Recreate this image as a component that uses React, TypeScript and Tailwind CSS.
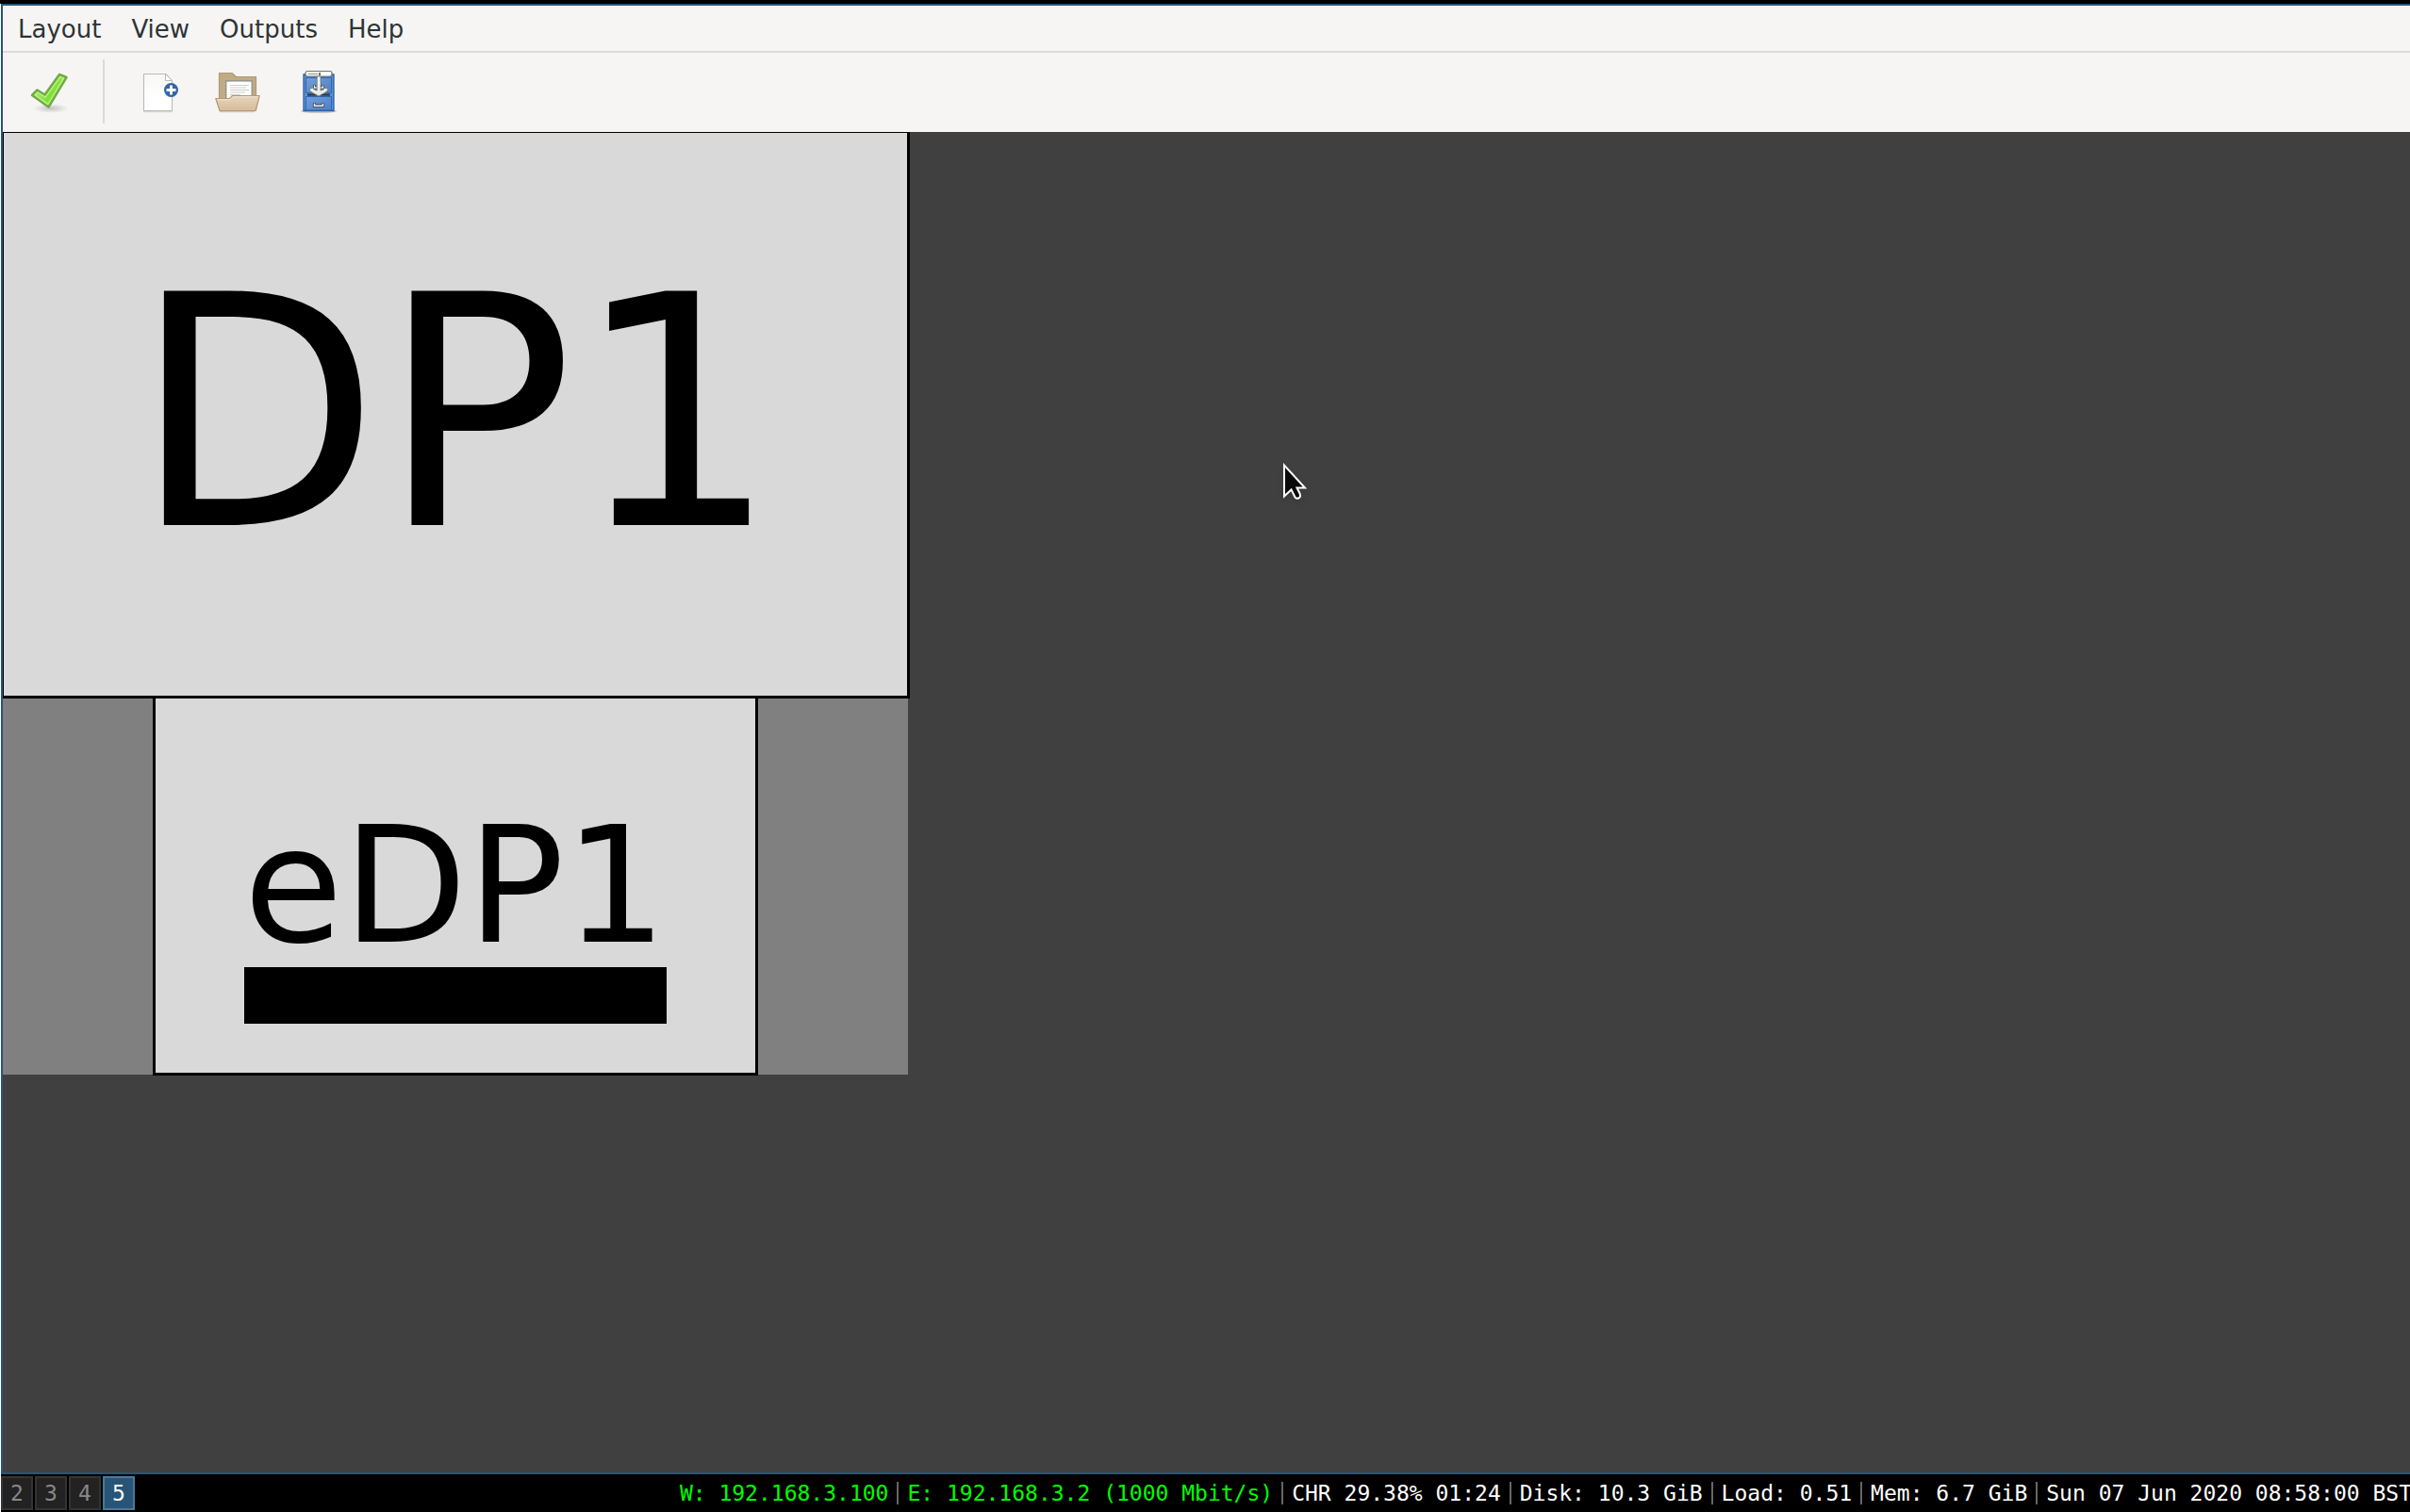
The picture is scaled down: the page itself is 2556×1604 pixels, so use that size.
import React from "react";

const menus = ["Layout", "View", "Outputs", "Help"];
const workspaces = ["2", "3", "4", "5"];
const status = [
  { text: "W: 192.168.3.100", up: true },
  { text: "E: 192.168.3.2 (1000 Mbit/s)", up: true },
  { text: "CHR 29.38% 01:24", up: false },
  { text: "Disk: 10.3 GiB", up: false },
  { text: "Load: 0.51", up: false },
  { text: "Mem: 6.7 GiB", up: false },
  { text: "Sun 07 Jun 2020 08:58:00 BST", up: false },
];

function ApplyIcon() {
  return (
    <svg width="48" height="48" viewBox="0 0 48 48" aria-hidden="true">
      <defs>
        <radialGradient id="tickShadow">
          <stop offset="0" stopColor="#000" stopOpacity="0.2" />
          <stop offset="1" stopColor="#000" stopOpacity="0" />
        </radialGradient>
        <linearGradient id="tickFill" x1="0" y1="0" x2="1" y2="0">
          <stop offset="0" stopColor="#b4e884" />
          <stop offset="0.45" stopColor="#7ee02e" />
          <stop offset="1" stopColor="#94e24c" />
        </linearGradient>
      </defs>
      <ellipse cx="27" cy="42" rx="19" ry="5" fill="url(#tickShadow)" />
      <path d="M7 28 L12.5 22.5 L20.5 27.5 L36 6 L43.5 9 L24.5 40.5 Z" fill="url(#tickFill)" stroke="#73a946" strokeWidth="2.5" strokeLinejoin="round" />
      <path d="M10.2 27.8 L13 25 L21.3 30.2 L36.7 8.6 L40.6 10.2 L23.8 37.6 Z" fill="none" stroke="#b9f28c" strokeWidth="1.3" strokeLinejoin="round" />
    </svg>
  );
}

function NewIcon() {
  return (
    <svg width="48" height="48" viewBox="0 0 48 48" aria-hidden="true">
      <defs>
        <linearGradient id="page" x1="0" y1="0" x2="0" y2="1">
          <stop offset="0" stopColor="#f7f7f5" />
          <stop offset="0.6" stopColor="#fff" />
        </linearGradient>
      </defs>
      <path d="M6 45.6 H37" stroke="#d9d8d6" strokeWidth="1.4" />
      <path d="M6.5 5.5 H30 L36.5 12.5 V44.5 H6.5 Z" fill="url(#page)" stroke="#babbb8" strokeWidth="1.1" strokeLinejoin="round" />
      <path d="M29.5 5.5 V12.5 H36.5 Z" fill="#fff" stroke="#babbb8" strokeWidth="1" strokeLinejoin="round" />
      <circle cx="35.5" cy="22.5" r="7.5" fill="#3465a4" />
      <path d="M35.5 17.5 V27.5 M30.5 22.5 H40.5" stroke="#fff" strokeWidth="2.8" />
    </svg>
  );
}

function OpenIcon() {
  return (
    <svg width="48" height="48" viewBox="0 0 48 48" aria-hidden="true">
      <defs>
        <linearGradient id="front" x1="0" y1="0" x2="0" y2="1">
          <stop offset="0" stopColor="#e6d5be" />
          <stop offset="1" stopColor="#d6bc98" />
        </linearGradient>
      </defs>
      <path d="M5 45.4 H42" stroke="#cfccc7" strokeWidth="1.5" />
      <path d="M4.5 43 V4.5 H18 L22.5 8.5 H43.5 V43 Z" fill="#c1ab84" stroke="#ae9a76" strokeWidth="1.2" strokeLinejoin="round" />
      <path d="M11.8 33 V12.8 H39.2 V33 Z" fill="#fff" stroke="#888a85" strokeWidth="1.2" />
      <path d="M16 17.5 H36 M16 20 H33 M16 22.5 H36 M16 25 H32 M16 27.5 H27" stroke="#cccdca" strokeWidth="1" />
      <path d="M0.8 31.5 H15.5 L18.5 28.5 H47.2 L43.2 44.5 H5 Z" fill="url(#front)" stroke="#b59a72" strokeWidth="1.2" strokeLinejoin="round" />
      <path d="M2.5 32.8 H16 L19 29.8 H45.5" fill="none" stroke="#f1e6d7" strokeWidth="1" />
    </svg>
  );
}

function SaveIcon() {
  return (
    <svg width="48" height="48" viewBox="0 0 48 48" aria-hidden="true">
      <defs>
        <linearGradient id="drawer" x1="0" y1="0" x2="1" y2="1">
          <stop offset="0" stopColor="#739fd9" />
          <stop offset="1" stopColor="#4a80c8" />
        </linearGradient>
        <linearGradient id="arrow" x1="0" y1="0" x2="0" y2="1">
          <stop offset="0" stopColor="#fff" />
          <stop offset="1" stopColor="#e4e6e2" />
        </linearGradient>
      </defs>
      <ellipse cx="24" cy="45" rx="19" ry="2" fill="#000" opacity="0.18" />
      <path d="M8 6 H40 V44.5 H8 Z" fill="#5b8fd3" stroke="#2b5da3" strokeWidth="1.3" />
      <path d="M10.5 9.5 H37.5 V25.5 H10.5 Z" fill="url(#drawer)" stroke="#2f66ae" strokeWidth="1" />
      <path d="M12 26.5 H36 V28.6 H12 Z" fill="#2e3436" />
      <path d="M10.5 29.5 H37.5 V44 H10.5 Z" fill="url(#drawer)" stroke="#2f66ae" strokeWidth="1" />
      <rect x="10" y="2.5" width="28" height="5.5" rx="2" fill="#fff" stroke="#70726e" strokeWidth="1.2" />
      <path d="M12.5 5.4 H23" stroke="#a9aba7" strokeWidth="1.6" />
      <path d="M25 4 V7" stroke="#111" strokeWidth="1.2" />
      <path d="M19.5 17 V20 H28.5 V17" fill="none" stroke="#41434a" strokeWidth="3" />
      <path d="M19.5 17.5 V20 H28.5 V17.5" fill="none" stroke="#eee" strokeWidth="1.3" />
      <path d="M22.2 8 H26 V23 Q29.5 22.5 30.5 20.2 L34.3 21.6 L32 24.6 L24 29 L16 24.6 L13.7 21.6 L17.5 20.2 Q19 22.5 22.2 23 Z" fill="url(#arrow)" stroke="#777974" strokeWidth="0.9" strokeLinejoin="round" />
      <path d="M19.5 36.3 V39.2 H28.5 V36.3" fill="none" stroke="#41434a" strokeWidth="3.2" />
      <path d="M19.5 36.8 V39.2 H28.5 V36.8" fill="none" stroke="#f4f4f2" strokeWidth="1.4" />
    </svg>
  );
}

function Pointer() {
  return (
    <svg className="drop-shadow-md" width="26" height="42" viewBox="0 0 26 42" aria-hidden="true">
      <path d="M2 2.5 V35.5 L9.5 28.5 L13.5 36.5 Q16 39 18.5 36.5 Q19.5 35 18.5 32.5 L15.5 26.5 H24 Z" fill="#0a0a0a" stroke="#fff" strokeWidth="2" strokeLinejoin="miter" />
    </svg>
  );
}

export default function App() {
  return (
    <div className="h-screen overflow-hidden bg-black pt-1 font-['DejaVu_Sans',sans-serif]">
      <div className="flex h-full flex-col border-l border-white">
        <main className="flex min-h-0 flex-1 flex-col border-y-2 border-l-2 border-[#285577] bg-[#404040]">
          <nav className="flex h-[50px] shrink-0 items-center border-b-2 border-[#dcdad8] bg-[#f6f5f4] pt-0.5 text-[26px] leading-8 text-[#2e3436]">
            {menus.map((m) => (
              <button key={m} className="px-4">
                {m}
              </button>
            ))}
          </nav>
          <div role="toolbar" className="flex h-[84px] shrink-0 items-center bg-[#f6f5f4] pb-0.5 text-black">
            <button aria-label="Apply" className="ml-6">
              <ApplyIcon />
            </button>
            <span className="ml-[34px] h-[68px] w-0.5 bg-[#dcdad8]" />
            <button aria-label="New" className="ml-[35px]">
              <NewIcon />
            </button>
            <button aria-label="Open" className="ml-[34px]">
              <OpenIcon />
            </button>
            <button aria-label="Save As" className="ml-[38px]">
              <SaveIcon />
            </button>
          </div>
          <section className="relative flex-1">
            <div className="flex w-[962px] flex-col items-center">
              <button className="flex h-[601px] w-full items-center justify-center border-t border-r-[3px] border-b-[3px] border-l border-black bg-[#d9d9d9] pb-0.5 text-[341px] leading-none">
                DP1
              </button>
              <div className="flex h-[399px] w-[960px] justify-center self-start bg-[#808080]">
                <button className="relative flex h-[400px] w-[642px] items-center justify-center border-x-[3px] border-b-[3px] border-black bg-[#d9d9d9] text-[171px] leading-none">
                  eDP1
                  <span className="absolute bottom-[52px] h-[60px] w-[448px] bg-black" />
                </button>
              </div>
            </div>
            <div className="absolute top-[351px] left-[1357px]">
              <Pointer />
            </div>
          </section>
        </main>
        <footer className="flex h-10 shrink-0 items-center justify-between font-['DejaVu_Sans_Mono',monospace] text-[23px] leading-7">
          <div className="flex gap-0.5">
            {workspaces.map((w) => (
              <button
                key={w}
                className={
                  w === "5"
                    ? "flex h-9 w-[34px] items-center justify-center border-2 border-[#4c7899] bg-[#285577] text-white"
                    : "flex h-9 w-[34px] items-center justify-center border-2 border-[#333333] bg-[#222222] text-[#888888]"
                }
              >
                {w}
              </button>
            ))}
          </div>
          <div className="-mr-0.5 flex items-center whitespace-pre">
            {status.map((s, i) => (
              <React.Fragment key={s.text}>
                {i > 0 && <span className="mx-[9px] h-6 w-0.5 bg-[#666666]" />}
                <span className={s.up ? "text-[#00ff00]" : "text-white"}>{s.text}</span>
              </React.Fragment>
            ))}
          </div>
        </footer>
      </div>
    </div>
  );
}
